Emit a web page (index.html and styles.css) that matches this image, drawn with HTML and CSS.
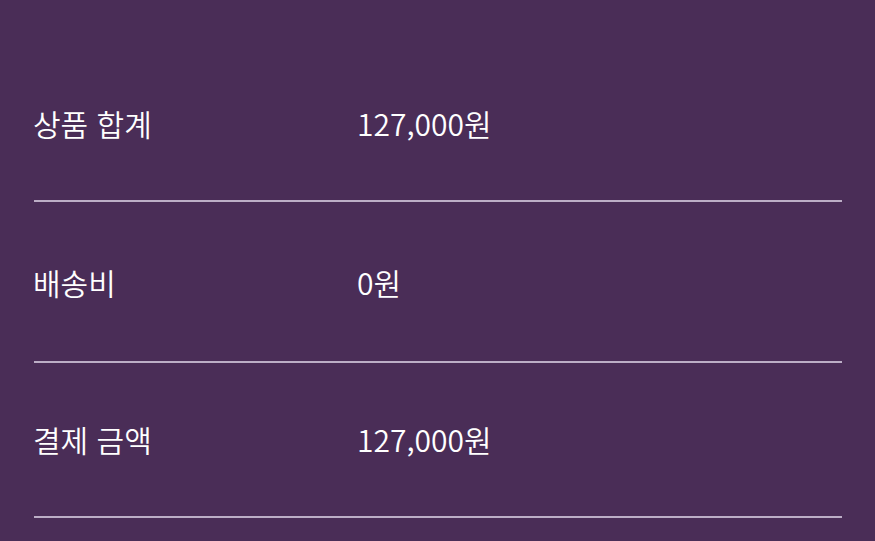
FILE: index.html
```html
<!DOCTYPE html>
<html lang="ko">
<head>
<meta charset="utf-8">
<link rel="stylesheet" href="styles.css">
</head>
<body>
<div class="summary">
  <div class="row">
    <span class="label">상품 합계</span>
    <span class="value">127,000원</span>
  </div>
  <div class="row">
    <span class="label">배송비</span>
    <span class="value">0원</span>
  </div>
  <div class="row">
    <span class="label">결제 금액</span>
    <span class="value">127,000원</span>
  </div>
</div>
</body>
</html>
```
FILE: styles.css
```css
html, body {
  margin: 0;
  padding: 0;
  background: #4a2d57;
}
body {
  width: 875px;
  height: 541px;
  overflow: hidden;
  font-family: "Noto Sans CJK KR", "Noto Sans", sans-serif;
  color: #ffffff;
}
.summary {
  padding: 46px 33px 0 34px;
  display: flex;
  flex-direction: column;
}
.row {
  display: flex;
  align-items: center;
  padding: 56px 0 57px 0;
  border-bottom: 2px solid #bcaec6;
  font-size: 30px;
  font-weight: 350;
  line-height: 40px;
}
.row:nth-child(1) {
  padding-top: 57px;
  padding-bottom: 57px;
}
.row:nth-child(2) {
  padding-top: 60px;
  padding-bottom: 59px;
}
.label {
  width: 324px;
  margin-left: -1px;
}
.value {
  flex: 1;
}
```
